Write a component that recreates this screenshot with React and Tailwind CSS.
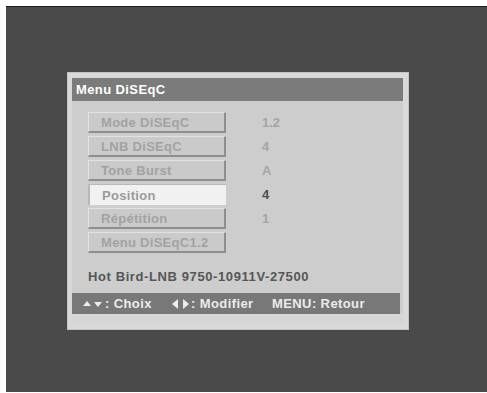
import React from "react";

const rows = [
  { label: "Mode DiSEqC", value: "1.2" },
  { label: "LNB DiSEqC", value: "4" },
  { label: "Tone Burst", value: "A" },
  { label: "Position", value: "4", active: true },
  { label: "Répétition", value: "1" },
  { label: "Menu DiSEqC1.2", value: "" },
];

const MenuButton = ({ label, active }) => (
  <div
    className={
      active
        ? "w-[138px] h-[21px] pl-[12px] flex items-center bg-[#f1f1f1] border-l-2 border-t border-[#b8b8b8] text-[#9a9a9a]"
        : "w-[138px] h-[21px] pl-[12px] flex items-center bg-[#cacaca] border-t border-l border-[#e2e2e2] border-b-2 border-r-2 border-b-[#8f8f8f] border-r-[#8f8f8f] text-[#a2a2a2]"
    }
  >
    <span className="text-[13px] font-bold leading-none tracking-[0.3px]">{label}</span>
  </div>
);

const UpDown = () => (
  <svg width="21" height="8" viewBox="0 0 21 8" className="inline-block mr-[1px]">
    <polygon points="0,6 4,1 8,6" fill="#ececec" />
    <polygon points="11,2 19,2 15,7" fill="#ececec" />
  </svg>
);

const LeftRight = () => (
  <svg width="18" height="10" viewBox="0 0 18 10" className="inline-block mr-[1px]">
    <polygon points="6,0 6,10 0,5" fill="#ececec" />
    <polygon points="11,0 11,10 17,5" fill="#ececec" />
  </svg>
);

const App = () => {
  return (
    <div
      className="w-[487px] h-[393px] bg-white pl-[6px] pt-[6px] overflow-hidden"
      style={{ fontFamily: '"Liberation Sans", Arial, sans-serif' }}
    >
      <div className="w-full h-[386px] bg-[#4a4a4a] border-t border-[#1c1c1c] pl-[61px] pt-[65px]">
        <div className="w-[342px] h-[258px] bg-[#d9d9d9] border border-[#c4c4c4] pt-[5px] pl-[4px] pr-[5px] pb-[4px] flex flex-col">
          <div className="h-[23px] bg-[#7b7b7b] flex items-center pl-[4px]">
            <span className="text-white text-[13px] font-bold tracking-[0.4px]">Menu DiSEqC</span>
          </div>
          <div className="flex-1 bg-[#cdcdcd] flex flex-col">
            <div className="pl-[16px] pt-[11px] flex flex-col gap-[3px]">
              {rows.map((r) => (
                <div key={r.label} className="flex items-center">
                  <MenuButton label={r.label} active={r.active} />
                  <span
                    className={
                      r.active
                        ? "ml-[36px] text-[13px] font-bold text-[#4e4e4e]"
                        : "ml-[36px] text-[13px] font-bold text-[#a4a4a4]"
                    }
                  >
                    {r.value}
                  </span>
                </div>
              ))}
            </div>
            <div className="pl-[16px] pt-[11px] h-[40px]">
              <span className="text-[13px] font-bold text-[#565656] tracking-[0.6px]">
                Hot Bird-LNB 9750-10911V-27500
              </span>
            </div>
            <div className="mr-[3px] h-[21px] bg-[#787878] flex items-center pl-[11px] text-[#ececec] text-[13px] font-bold tracking-[0.4px]">
              <span className="w-[89px] flex items-center">
                <UpDown />: Choix
              </span>
              <span className="w-[100px] flex items-center">
                <LeftRight />: Modifier
              </span>
              <span>MENU: Retour</span>
            </div>
            <div className="flex-1 bg-[#d6d6d6]" />
          </div>
        </div>
      </div>
    </div>
  );
};

export default App;
